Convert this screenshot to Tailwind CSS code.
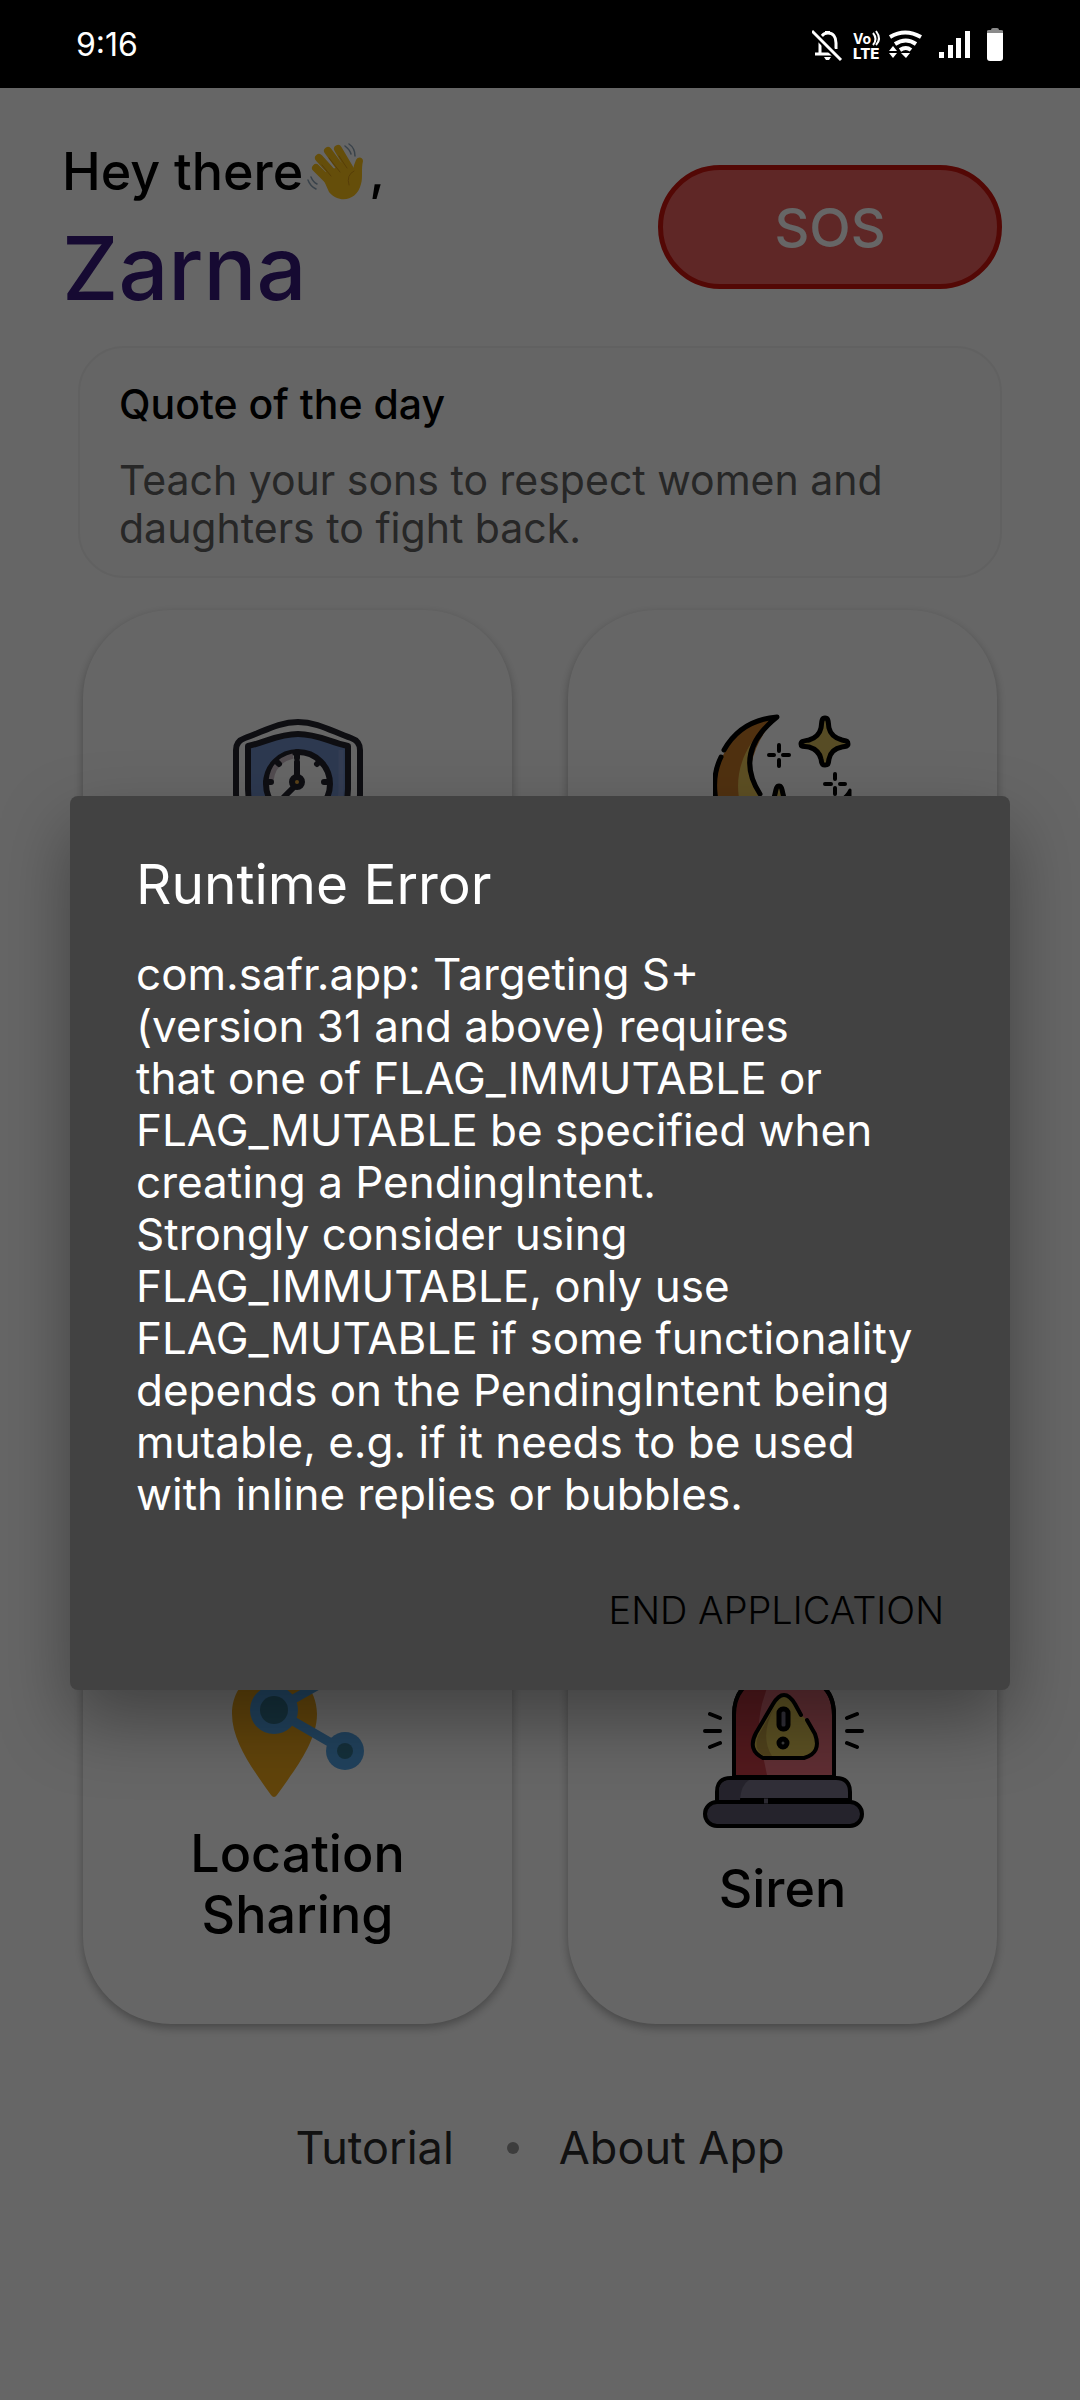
<!DOCTYPE html>
<html lang="en">
<head>
  <meta charset="UTF-8">
  <meta name="viewport" content="width=device-width, initial-scale=1.0">
  <title>Safr</title>
  <script src="https://cdn.jsdelivr.net/npm/@tailwindcss/browser@4"></script>
</head>
<body class="bg-white font-['Inter',sans-serif] min-h-screen relative">
  <!-- Status bar -->
  <header class="relative z-20 h-[88px] bg-black text-white flex items-center justify-between pl-[76px] pr-[76px] pt-[2px]">
    <span class="text-[32px]">9:16</span>
    <svg class="w-[192px] h-[34px]" viewBox="812 27 192 34" fill="none" stroke="#fff" stroke-width="3">
      <path d="M820 52V42c0-6 3-10 8-10s8 4 8 10v6M815 53h22"/>
      <path d="M812 30l29 29" stroke="#000" stroke-width="7"/>
      <path d="M812 30l29 29"/>
      <path d="M824 56h7l-2 3h-3zM825 30h5v3h-5z" fill="#fff" stroke="none"/>
      <text x="853" y="43" font-family="Inter" font-size="14" font-weight="700" fill="#fff" stroke="none">Vo</text>
      <text x="853" y="58" font-family="Inter" font-size="15" font-weight="800" fill="#fff" stroke="none">LTE</text>
      <path d="M873 32q5 6 0 12M876 30q6 8 0 14" stroke-width="2"/>
      <path d="M890 36q15-9 31 0M895 43q11-7 21 0M900 49q6-4 11 0" stroke-width="4"/>
      <path d="M901 52h9l-4 5zM889 50l4-5 4 5zM889 52l4 5 4-5z" fill="#fff" stroke="none"/>
      <path d="M939 51h5v6h-5zM948 44h5v13h-5zM956 37h5v20h-5zM965 30h5v27h-5z" fill="#fff" stroke="none"/>
      <path d="M987 32v-2q0-1 2-1h2q0-2 2-2h4q2 0 2 2h2q2 0 2 1v2z" fill="#8a8a8a" stroke="none"/>
      <path d="M987 32h16v25q0 3-3 3h-10q-3 0-3-3z" fill="#fff" stroke="none"/>
    </svg>
  </header>

  <main class="px-[62px]">
    <div class="flex items-center justify-between pt-[50px] pr-4">
      <div>
        <h2 class="text-[52px] leading-[68px] font-medium flex items-center">Hey there
          <svg class="w-[58px] h-[58px] ml-1" viewBox="0 0 58 58" stroke-linecap="round">
            <g stroke="#fcc21b" stroke-width="8" fill="none">
              <path d="M9 25l14 14M12 15l18 20M21 8l16 22M31 6l13 22"/>
            </g>
            <path d="M14 31L40 20l6 7q1-6 3-10c2-4 7-3 7 1-2 8 0 16-2 23-4 17-22 20-32 8z" fill="#fcc21b"/>
            <path d="M47 28q-8 4-5 14M15 22l9 11M22 15l11 14M32 13l8 12" fill="none" stroke="#d89a12" stroke-width="1"/>
            <path d="M1 37q2 6 8 9M4 34q2 5 6 7M42 1q6 4 6 12M38 3q5 4 6 8" fill="none" stroke="#8fa5b8" stroke-width="1.5"/>
          </svg><span class="ml-1">,</span></h2>
        <h1 class="text-[88px] leading-[124px] font-medium text-[#37197d]">Zarna</h1>
      </div>
      <button class="w-[344px] h-[124px] mt-[-14px] rounded-full border-[5px] border-[#d0140d] bg-[#ee6260] text-white text-[54px] font-medium">SOS</button>
    </div>

    <section class="mt-4 mx-4 px-[39px] pt-8 pb-6 rounded-[46px] border-2 border-[#f3f3f3] bg-[#fdfdfd]">
      <h3 class="text-[41px] leading-[48px] font-medium">Quote of the day</h3>
      <p class="mt-7 text-[41px] leading-[48px] text-[#616161]">Teach your sons to respect women and<br>daughters to fight back.</p>
    </section>

    <section class="mt-8 mx-[21px] grid grid-cols-2 gap-x-14 gap-y-[26px] auto-rows-[454px]">
      <a href="#" class="rounded-[88px] bg-white shadow-[0_4px_10px_rgba(0,0,0,0.3)] flex justify-center pt-[109px]">
        <!-- Shield with clock -->
        <svg class="w-[130px] h-[152px]" viewBox="0 0 130 152" fill="none" stroke="#24242e" stroke-width="6" stroke-linejoin="round">
          <path d="M3 31q0-9 9-12C30 13 45 3 65 3s35 10 53 16q9 3 9 12v44q0 48-62 74Q3 123 3 75z" fill="#fff"/>
          <path d="M15 27C34 23 45 15 65 15s31 8 50 12v43q0 43-50 64-50-21-50-64z" fill="#718fc8"/>
          <path d="M108 31v41q0 35-43 57" stroke="#8299cf" stroke-width="5"/>
          <circle cx="65" cy="65" r="32" fill="#fff"/>
          <path d="M38 62q2-20 22-25" stroke="#cdbec8" stroke-width="5"/>
          <path d="M64 33v6M44 43l2 2M86 43l-2 2M33 63h5M96 63h-5M64 43v15M61 68L51 78" stroke-linecap="round"/>
          <circle cx="64" cy="63" r="5" fill="#e3a53e"/>
        </svg>
      </a>
      <a href="#" class="rounded-[88px] bg-white shadow-[0_4px_10px_rgba(0,0,0,0.3)] flex justify-center pt-[104px]">
        <!-- Moon and stars -->
        <svg class="w-[140px] h-[150px]" viewBox="712 713 140 150" fill="none" stroke="#000" stroke-width="5" stroke-linecap="round" stroke-linejoin="round">
          <path d="M776 716c-34 3-62 35-62 72s20 66 70 70c-48-48-44-105-8-142z" fill="#c97a28" stroke="none"/>
          <path d="M751 741c-17 25-19 55-3 85l18-22c-18-22-18-40-15-63z" fill="#e8c558" stroke="none"/>
          <path d="M720 756q-8 16-6 36 2 50 70 66M723 749q17-30 53-33-44 35-17 77"/>
          <path d="M824 717c4 0 3 5 4 10q2 9 13 12c5 1 6 1 6 4s-3 2-6 3q-11 2-13 12c-1 5 0 6-4 6s-3-2-4-6q-2-9-12-12c-6-1-8 0-8-3s3-3 8-4q10-3 12-12c1-5 0-10 4-10z" fill="#d9bd5c"/>
          <path d="M778 785c4 0 3 9 6 14q5 8 14 10H758q9-2 14-10c3-5 2-14 6-14z" fill="#d9bd5c"/>
          <path d="M778 744v6M778 759v6M768 754h5M782 754h6M834 773v5M834 787v6M824 783h6M839 783h5" stroke-width="4"/>
          <path d="M849 789q-3 6-9 10l9 4z" fill="#000" stroke-width="3"/>
        </svg>
      </a>
      <div class="rounded-[88px] bg-white shadow-[0_4px_10px_rgba(0,0,0,0.3)]"></div>
      <div class="rounded-[88px] bg-white shadow-[0_4px_10px_rgba(0,0,0,0.3)]"></div>
      <a href="#" class="rounded-[88px] bg-white shadow-[0_4px_10px_rgba(0,0,0,0.3)] flex flex-col items-center justify-center text-center pb-3">
        <!-- Map pin with share nodes -->
        <svg class="w-[132px] h-[160px]" viewBox="233 1636 132 160">
          <path d="M275 1670c-24 0-42 17-42 43 0 28 22 57 39 81q3 4 6 0c17-24 40-53 40-81 0-26-19-43-43-43z" fill="#f2ab1c"/>
          <path d="M275 1709l71-40M275 1709l71 41" stroke="#54a5e8" stroke-width="9"/>
          <circle cx="275" cy="1709" r="24" fill="#54a5e8"/>
          <circle cx="275" cy="1709" r="14" fill="#367894"/>
          <circle cx="346" cy="1750" r="19" fill="#54a5e8"/>
          <circle cx="346" cy="1750" r="8" fill="#367894"/>
        </svg>
        <span class="mt-[26px] w-64 text-[52px] leading-[61px] font-medium">Location Sharing</span>
      </a>
      <a href="#" class="rounded-[88px] bg-white shadow-[0_4px_10px_rgba(0,0,0,0.3)] flex flex-col items-center justify-center text-center pb-2">
        <!-- Siren lamp -->
        <svg class="w-[162px] h-[160px]" viewBox="700 1668 162 160" fill="none" stroke="#000" stroke-width="4" stroke-linecap="round" stroke-linejoin="round">
          <path d="M732 1777v-62q0-40 50-40t50 40v62z" fill="#ed7480"/>
          <path d="M734 1775v-60q0-36 36-38-15 30-13 60l8 38z" fill="#cc3f4a" stroke="none"/>
          <path d="M732 1777v-62q0-40 50-40t50 40v62z"/>
          <path d="M715 1800v-8q0-14 14-14h105q14 0 14 14v8z" fill="#7a758c"/>
          <path d="M717 1800v-8q0-12 12-12h18q-8 5-9 20z" fill="#5d596e" stroke="none"/>
          <rect x="703" y="1802" width="157" height="24" rx="12" fill="#5d596e"/>
          <path d="M762 1801h4" stroke="#6c687c" stroke-width="5" stroke-linecap="butt"/>
          <path d="M799 1715l-6-11q-11-18-22 0l-17 29q-9 17 7 25h41q18-5 11-24l-8-14" fill="#e6cb57"/>
          <path d="M773 1706l-17 30q-5 14 6 20h8q-13-20 3-50z" fill="#c9a548" stroke="none"/>
          <rect x="777" y="1709" width="9" height="20" rx="4" fill="#7a758c" stroke-width="5"/>
          <circle cx="781" cy="1743" r="4" fill="#999" stroke-width="5"/>
          <path d="M708 1714l10 4M703 1731h15M708 1747l10-4M855 1714l-10 4M860 1731h-15M855 1747l-10-4"/>
        </svg>
        <span class="mt-[30px] text-[52px] leading-[61px] font-medium">Siren</span>
      </a>
    </section>

    <footer class="mt-[92px] pb-32 flex items-center justify-center text-[45px] leading-[64px] text-[#2b2b2b]">
      <a href="#">Tutorial</a>
      <span class="w-3 h-3 rounded-full bg-[#999] ml-[53px] mr-10"></span>
      <a href="#">About App</a>
    </footer>
  </main>

  <!-- Error dialog -->
  <div class="absolute inset-0 z-10 bg-black/60"></div>
  <div role="alertdialog" aria-labelledby="dialogTitle" class="absolute z-20 top-[796px] inset-x-[70px] rounded-lg bg-[#424242] text-white px-[66px] pt-[56px] pb-[46px] shadow-[0_32px_70px_rgba(0,0,0,0.35)]">
    <h2 id="dialogTitle" class="text-[55px] leading-[64px]">Runtime Error</h2>
    <p class="mt-8 text-[44px] leading-[52px]">com.safr.app: Targeting S+<br>(version 31 and above) requires<br>that one of FLAG_IMMUTABLE or<br>FLAG_MUTABLE be specified when<br>creating a PendingIntent.<br>Strongly consider using<br>FLAG_IMMUTABLE, only use<br>FLAG_MUTABLE if some functionality<br>depends on the PendingIntent being<br>mutable, e.g. if it needs to be used<br>with inline replies or bubbles.</p>
    <div class="flex justify-end mt-14">
      <button class="h-[68px] text-[38px] font-light text-black">END APPLICATION</button>
    </div>
  </div>
</body>
</html>
